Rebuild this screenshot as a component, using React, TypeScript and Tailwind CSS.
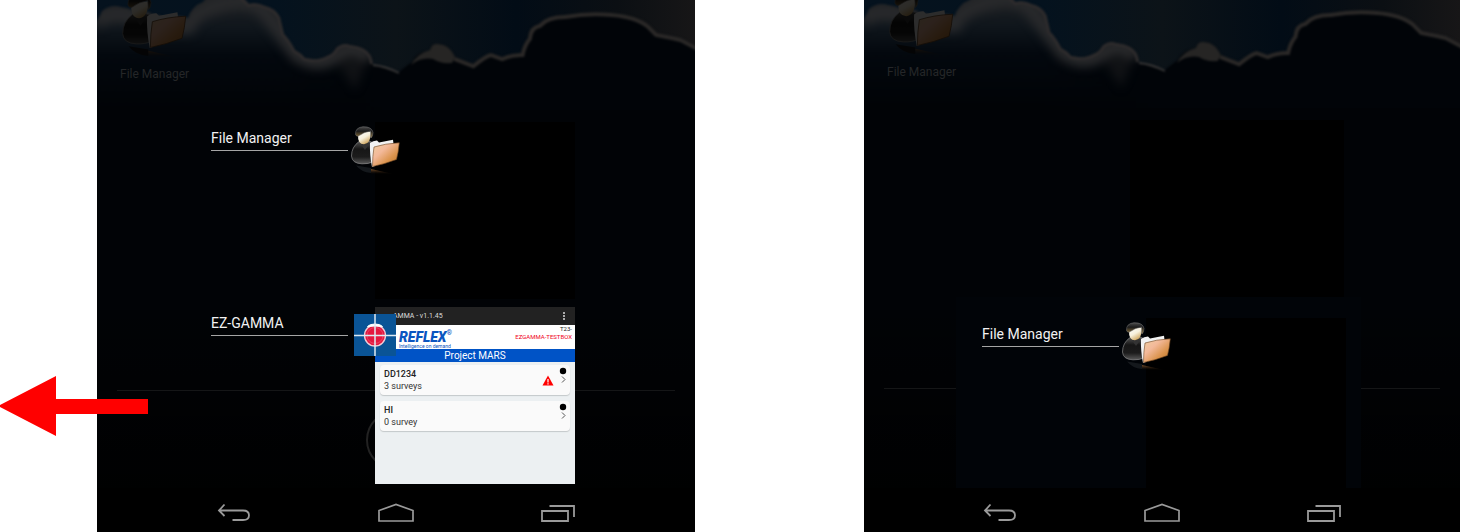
import React from "react";

function FolderUserIcon({ id, className }: { id: string; className: string }) {
  return (
    <svg viewBox="0 0 50 50" className={className} aria-hidden="true">
      <defs>
        <linearGradient id={id + "b"} x1="0" y1="0" x2="0" y2="1">
          <stop offset="0" stopColor="#565656" />
          <stop offset="0.35" stopColor="#161616" />
          <stop offset="0.7" stopColor="#1c1c1c" />
          <stop offset="1" stopColor="#5a5a5a" />
        </linearGradient>
        <linearGradient id={id + "f"} x1="0" y1="0" x2="1" y2="1">
          <stop offset="0" stopColor="#f0cfa0" />
          <stop offset="0.35" stopColor="#f3b99a" />
          <stop offset="0.65" stopColor="#dc9550" />
          <stop offset="1" stopColor="#b8701f" />
        </linearGradient>
        <linearGradient id={id + "h"} x1="0" y1="0" x2="0.6" y2="1">
          <stop offset="0" stopColor="#ffffff" />
          <stop offset="0.55" stopColor="#f7f0dc" />
          <stop offset="1" stopColor="#cfa45a" />
        </linearGradient>
        <linearGradient id={id + "c"} x1="0" y1="0" x2="0" y2="1">
          <stop offset="0" stopColor="#4c4c4c" />
          <stop offset="0.4" stopColor="#1b1b1b" />
          <stop offset="1" stopColor="#9a7c40" />
        </linearGradient>
        <linearGradient id={id + "r"} x1="0" y1="0" x2="0" y2="1">
          <stop offset="0" stopColor="#9a6434" stopOpacity="0.8" />
          <stop offset="1" stopColor="#2a1a0a" stopOpacity="0" />
        </linearGradient>
      </defs>
      <path d="M5 39.500 Q10 46 20 47 V42Z" fill="#14181c" />
      <path d="M20 43 L42 48 H20Z" fill={`url(#${id}r)`} />
      <path d="M8 15.500 Q0.500 21 0.500 30 Q1 37.500 11 37.800 Q18 38 21.500 36 L24 19 Q21 15.500 18 15Z" fill={`url(#${id}b)`} stroke="#8a8a8a" strokeWidth="0.700" />
      <path d="M9 17 L14 24 L19 17Z" fill="#333" />
      <path d="M7 8 Q6.500 18.300 13 18.300 Q20 17.500 20 5.500 L14 6Z" fill={`url(#${id}h)`} />
      <path d="M4.500 8.500 Q4 1.500 12 0.700 Q21 0.500 22 6.500 Q22 10 20 12 L19.500 5 Q13 6 7.500 10 Q5.500 11 4.500 8.500Z" fill={`url(#${id}c)`} stroke="#777" strokeWidth="0.500" />
      <path d="M19 17 Q22 14.500 26 14.500 L28 16.500 L42 13.800 L43 22 L24 40 L21 41 Q18.500 28 19 17Z" fill="#f2f2f2" />
      <path d="M23 21 Q34 17.500 48.300 16.800 Q47.500 26 45.500 33.500 Q34 38 21.500 40.500 Q21.500 30 23 21Z" fill={`url(#${id}f)`} stroke="#6b4320" strokeWidth="0.600" />
    </svg>
  );
}

function GammaIcon({ className }: { className: string }) {
  return (
    <svg viewBox="0 0 42 42" className={className} aria-hidden="true">
      <rect width="42" height="42" fill="#0a5496" />
      <circle cx="21" cy="21.500" r="10.500" fill="#e5173f" stroke="#f3cdd6" strokeWidth="1.300" />
      <circle cx="21" cy="21.500" r="8" fill="none" stroke="#e84a69" strokeWidth="0.900" />
      <path d="M13.500 12.500 Q15.500 10 21 10 Q26.500 10 28.500 12.500 Q21 11.500 13.500 12.500Z" fill="#fff" stroke="#fff" strokeWidth="1" />
      <path d="M21 0V42M0 21.500H42" stroke="#dfeaf3" strokeWidth="1.500" />
    </svg>
  );
}

function Wallpaper({ id }: { id: string }) {
  return (
    <svg viewBox="0 0 598 110" preserveAspectRatio="none" className="h-[110px] w-full" aria-hidden="true">
      <defs>
        <linearGradient id={id + "sky"} x1="0" y1="0" x2="1" y2="0">
          <stop offset="0" stopColor="#05121e" />
          <stop offset="0.3" stopColor="#04121e" />
          <stop offset="0.5" stopColor="#0c1318" />
          <stop offset="0.7" stopColor="#020c16" />
          <stop offset="0.87" stopColor="#0b0f13" />
          <stop offset="1" stopColor="#171617" />
        </linearGradient>
        <linearGradient id={id + "cloud"} gradientUnits="userSpaceOnUse" x1="0" y1="0" x2="0" y2="110">
          <stop offset="0" stopColor="#1e2023" />
          <stop offset="0.25" stopColor="#10161c" />
          <stop offset="0.5" stopColor="#03080e" />
          <stop offset="1" stopColor="#010306" />
        </linearGradient>
        <linearGradient id={id + "dark"} gradientUnits="userSpaceOnUse" x1="180" y1="0" x2="300" y2="0">
          <stop offset="0" stopColor="#010408" stopOpacity="0" />
          <stop offset="1" stopColor="#010408" />
        </linearGradient>
        <filter id={id + "soft"} colorInterpolationFilters="sRGB" x="-5%" y="-20%" width="110%" height="140%">
          <feGaussianBlur stdDeviation="1" />
        </filter>
        <filter id={id + "haze"} colorInterpolationFilters="sRGB" x="-20%" y="-40%" width="140%" height="180%">
          <feGaussianBlur stdDeviation="5" />
        </filter>
        <path id={id + "shape"} d="M-5 28 Q3 17 5 11 Q14 4 24 7 Q33 8 40 12 Q48 8 55 14 Q62 14 68 18 Q80 13 91 18 Q95 6 106 2 L112 -6 H143 L152 4 Q160 2 168 6 Q178 8 183 17 L187 34 Q193 40 198 50 Q204 53 208 58 Q222 61 230 56 Q237 53 239 48 Q246 42 253 45 Q262 46 267 49 Q275 53 276 64 Q288 65 302 72 L315 62 Q320 52 333 50 Q335 43 340 44 Q352 44 358 57 L376 64 Q388 54 394 53 L405 57 Q414 53 424 53 Q426 44 431 38 Q432 26 442 24 Q450 15 468 15 Q490 11 515 13 Q540 15 552 25 L560 33 Q576 36 584 38 L603 48 V116 H-5Z" />
        <clipPath id={id + "clip"}>
          <use href={`#${id}shape`} />
        </clipPath>
      </defs>
      <rect width="598" height="110" fill={`url(#${id}sky)`} />
      <g filter={`url(#${id}soft)`}>
        <use href={`#${id}shape`} fill={`url(#${id}cloud)`} />
        <rect x="180" y="0" width="425" height="116" fill={`url(#${id}dark)`} clipPath={`url(#${id}clip)`} />
        <g clipPath={`url(#${id}clip)`}>
          <g filter={`url(#${id}haze)`}>
            <path d="M-2 22 Q14 8 40 18 T91 26 Q95 12 125 4 T168 12 T200 54 Q222 68 240 54 T272 60" fill="none" stroke="#28292b" strokeWidth="16" />
            <path d="M240 62 Q262 50 268 66 L258 90Z" fill="#101215" />
          </g>
          <path d="M143 -4 L152 4 Q160 2 168 6 Q178 8 183 17 L187 34 Q193 40 198 50 Q204 53 208 58 Q222 61 230 56 Q237 53 239 48 Q246 42 253 45 Q262 46 267 49 Q275 53 276 64" fill="none" stroke="#2d2b2c" strokeWidth="6" />
          <path d="M358 57 L376 64 Q388 54 394 53 L405 57 Q414 53 424 53 Q426 44 431 38 Q432 26 442 24 Q450 15 468 15 Q490 11 515 13 Q540 15 552 25 L560 33 Q576 36 584 38 L603 48" fill="none" stroke="#2a2827" strokeWidth="8" />
        </g>
        <path d="M276 65 Q288 66 302 73" fill="none" stroke="#3a3939" strokeWidth="1.800" />
        <path d="M314 65 Q320 53 333 50 Q335 43 340 44 Q352 44 358 57 L355 63 Q343 64 336 59 Q324 57 314 65Z" fill="#262524" />
      </g>
    </svg>
  );
}

function TaskLabel({ children }: { children: string }) {
  return (
    <div className="mt-[7px] w-[137px] border-b border-[#a5a5a5] pb-[3px] text-[14px] leading-[18px] text-[#f2f2f2]">
      {children}
    </div>
  );
}

function Task({ name, icon, children }: { name: string; icon: React.ReactNode; children?: React.ReactNode }) {
  return (
    <li className="flex h-[177px] min-h-0 items-start gap-[27px]">
      <TaskLabel>{name}</TaskLabel>
      <div className="relative h-full w-[200px] bg-black">
        {children}
        {icon}
      </div>
    </li>
  );
}

function Survey({ title, count, warning }: { title: string; count: string; warning?: boolean }) {
  return (
    <li className="flex h-[30px] items-center rounded-sm bg-[#fafafa] pl-1 pr-0.5 shadow-[0_1px_1px_#c4c8ca]">
      <div className="flex-1 text-[9px] leading-[12px] text-[#333]">
        <div className="font-medium text-[#222]">{title}</div>
        <div>{count}</div>
      </div>
      {warning && (
        <svg viewBox="0 0 12 11" className="mr-1 h-[11px] w-3" role="img" aria-label="Warning">
          <path d="M6 0.500 L11.500 10.500 H0.500Z" fill="#f00" />
          <path d="M6 4V7.500M6 8.300V9.500" stroke="#fff" strokeWidth="1.200" />
        </svg>
      )}
      <svg viewBox="0 0 10 26" className="h-[26px] w-2.5" aria-hidden="true">
        <circle cx="5" cy="4" r="3.200" fill="#000" />
        <path d="M4 9.500 L7 12.500 L4 15.500" fill="none" stroke="#555" strokeWidth="1" />
      </svg>
    </li>
  );
}

function GammaApp() {
  return (
    <div className="flex h-full flex-col bg-[#ecf0f2]">
      <div className="flex h-[18px] items-center justify-between bg-[#222] pr-[9px] text-[7px] text-[#ddd]">
        <span className="truncate pl-[18px] pt-px">AMMA - v1.1.45</span>
        <svg viewBox="0 0 4 10" className="h-2.5 w-1" role="img" aria-label="Menu">
          <path d="M1 1h2v2h-2zM1 4h2v2h-2zM1 7h2v2h-2z" fill="#aaa" />
        </svg>
      </div>
      <div className="flex h-6 justify-between bg-white pl-6 pr-[3px]">
        <div className="pt-[5px] text-[#0b55c0]">
          <div className="flex text-[14px] font-black italic leading-[14px]">
            REFLEX<sup className="top-0 text-[7px] font-normal not-italic leading-[6px]">®</sup>
          </div>
          <div className="text-[5px] leading-[5px]">Intelligence on demand</div>
        </div>
        <div className="text-right text-[6px] leading-[8px]">
          <div className="text-[#222]">T23-</div>
          <div className="text-[#f00020]">EZGAMMA-TESTBOX</div>
        </div>
      </div>
      <div className="bg-[#0053c6] text-center text-[10px] leading-[13px] text-white">Project MARS</div>
      <ul className="flex flex-col gap-1.5 px-[5px] pt-[3px]">
        <Survey title="DD1234" count="3 surveys" warning />
        <Survey title="HI" count="0 survey" />
      </ul>
    </div>
  );
}

function NavBar() {
  const button = "flex h-11 w-[34px] items-center justify-center";
  return (
    <nav className="relative flex h-11 justify-center gap-32 bg-black" aria-label="System">
      <button className={button} aria-label="Back">
        <svg viewBox="0 0 34 20" className="mt-1.5 h-5 w-[34px] shrink-0" fill="none" stroke="#9a9a9a" strokeWidth="1.800">
          <path d="M7.500 1.500 L2 7.500 L7.500 13M2 7.500H26 Q32 7.500 32 12.200 Q32 17 26 17H15.500" />
        </svg>
      </button>
      <button className={button} aria-label="Home">
        <svg viewBox="0 0 36 20" className="mt-1.5 h-5 w-9 shrink-0" fill="none" stroke="#9a9a9a" strokeWidth="1.700">
          <path d="M1 18V7.500L18 1.500L35 7.500V18Z" />
        </svg>
      </button>
      <button className={button} aria-label="Recent apps">
        <svg viewBox="0 0 34 20" className="mt-1.5 h-5 w-[34px] shrink-0" fill="none" stroke="#9a9a9a" strokeWidth="1.800">
          <path d="M1 8H27V18H1ZM8.500 3H33V14" />
        </svg>
      </button>
    </nav>
  );
}

function Phone({ id, shift, children }: { id: string; shift?: boolean; children: React.ReactNode }) {
  return (
    <section className="relative flex flex-col overflow-hidden bg-[#010306] font-[Roboto,sans-serif]">
      <div className={shift ? "absolute inset-x-0 -top-0.5 bottom-0" : "absolute inset-0"}>
        <Wallpaper id={id} />
        <div className="absolute left-[23px] top-0 text-[12px] leading-4 text-[#252628]">
          <div className="flex h-[66px] justify-center">
            <FolderUserIcon id={id + "bg"} className="-mt-1.5 h-[66px] w-[66px] brightness-[0.18]" />
          </div>
          File Manager
        </div>
        <div className="absolute inset-x-0 bottom-0 top-[300px] bg-linear-to-b from-transparent to-black" />
        <div className="absolute inset-x-5 top-[390px] border-t border-[#151617]" />
        {!shift && <div className="absolute left-[269px] top-[410px] h-[60px] w-[60px] rounded-full border-2 border-[#222]" />}
      </div>
      {children}
      <NavBar />
    </section>
  );
}

export default function App() {
  return (
    <main className="relative grid min-h-screen grid-cols-[598fr_596fr] gap-[169px] bg-white pl-[97px]">
      <Phone id="left">
        <ul className="relative flex flex-1 flex-col gap-2 pl-[114px] pt-[122px]">
          <Task name="File Manager" icon={<FolderUserIcon id="fm1" className="absolute -left-6 top-1 h-[50px] w-[50px]" />} />
          <Task name="EZ-GAMMA" icon={<GammaIcon className="absolute -left-[21px] top-[7px] h-[42px] w-[42px]" />}>
            <GammaApp />
          </Task>
        </ul>
      </Phone>
      <Phone id="right" shift>
        <div className="relative flex h-[488px] flex-col pt-[120px]">
          <div className="ml-[266px] h-[177px] w-[214px] shrink-0 bg-black" />
          <ul className="ml-[92px] flex min-h-0 w-[405px] flex-1 flex-col bg-[#010408] pl-[26px] pt-[21px]">
            <Task name="File Manager" icon={<FolderUserIcon id="fm2" className="absolute -left-6 top-1 h-[50px] w-[50px]" />} />
          </ul>
        </div>
      </Phone>
      <svg viewBox="0 0 149 60" className="absolute left-0 top-[376px] h-[60px] w-[149px]" role="img" aria-label="Swipe left">
        <path d="M-2 30 L56 0V23H148V38H56V60Z" fill="#f00" />
      </svg>
    </main>
  );
}
